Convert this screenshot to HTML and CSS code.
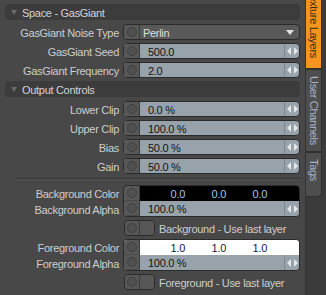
FILE: index.html
```html
<!DOCTYPE html>
<html lang="en">
<head>
    <meta charset="UTF-8">
    <title>Texture Layers</title>
    <link rel="stylesheet" href="styles.css">
</head>
<body>
    <div class="window">
        <div class="panel">
            <div class="group">
                <div class="head"><span class="tri"></span>Space - GasGiant</div>
                <div class="row">
                    <span class="label">GasGiant Noise Type</span>
                    <div class="ctl drop">
                        <span class="dot"><i></i></span>
                        <span class="val">Perlin</span>
                        <svg class="down" width="8" height="5" viewBox="0 0 8 5"><polygon points="0,0 8,0 4,5"/></svg>
                    </div>
                </div>
                <div class="row">
                    <span class="label">GasGiant Seed</span>
                    <div class="ctl num">
                        <span class="dot"><i></i></span>
                        <span class="val">500.0</span>
                        <span class="spin"><svg width="11" height="8" viewBox="0 0 11 8"><polygon points="0,4 4,0 4,8"/><polygon points="7,0 11,4 7,8"/></svg></span>
                    </div>
                </div>
                <div class="row">
                    <span class="label">GasGiant Frequency</span>
                    <div class="ctl num">
                        <span class="dot"><i></i></span>
                        <span class="val">2.0</span>
                        <span class="spin"><svg width="11" height="8" viewBox="0 0 11 8"><polygon points="0,4 4,0 4,8"/><polygon points="7,0 11,4 7,8"/></svg></span>
                    </div>
                </div>
            </div>

            <div class="group">
                <div class="head"><span class="tri"></span>Output Controls</div>
                <div class="row">
                    <span class="label">Lower Clip</span>
                    <div class="ctl num">
                        <span class="dot"><i></i></span>
                        <span class="val">0.0 %</span>
                        <span class="spin"><svg width="11" height="8" viewBox="0 0 11 8"><polygon points="0,4 4,0 4,8"/><polygon points="7,0 11,4 7,8"/></svg></span>
                    </div>
                </div>
                <div class="row">
                    <span class="label">Upper Clip</span>
                    <div class="ctl num">
                        <span class="dot"><i></i></span>
                        <span class="val">100.0 %</span>
                        <span class="spin"><svg width="11" height="8" viewBox="0 0 11 8"><polygon points="0,4 4,0 4,8"/><polygon points="7,0 11,4 7,8"/></svg></span>
                    </div>
                </div>
                <div class="row">
                    <span class="label">Bias</span>
                    <div class="ctl num">
                        <span class="dot"><i></i></span>
                        <span class="val">50.0 %</span>
                        <span class="spin"><svg width="11" height="8" viewBox="0 0 11 8"><polygon points="0,4 4,0 4,8"/><polygon points="7,0 11,4 7,8"/></svg></span>
                    </div>
                </div>
                <div class="row">
                    <span class="label">Gain</span>
                    <div class="ctl num">
                        <span class="dot"><i></i></span>
                        <span class="val">50.0 %</span>
                        <span class="spin"><svg width="11" height="8" viewBox="0 0 11 8"><polygon points="0,4 4,0 4,8"/><polygon points="7,0 11,4 7,8"/></svg></span>
                    </div>
                </div>
            </div>

            <div class="sep"></div>

            <div class="group">
                <div class="pair">
                    <div class="labels">
                        <span class="label">Background Color</span>
                        <span class="label">Background Alpha</span>
                    </div>
                    <div class="box">
                        <div class="line color bg">
                            <span class="dot"><i></i></span>
                            <span class="cols"><span>0.0</span><span>0.0</span><span>0.0</span></span>
                        </div>
                        <div class="line num">
                            <span class="dot"><i></i></span>
                            <span class="val">100.0 %</span>
                            <span class="spin"><svg width="11" height="8" viewBox="0 0 11 8"><polygon points="0,4 4,0 4,8"/><polygon points="7,0 11,4 7,8"/></svg></span>
                        </div>
                    </div>
                </div>
                <div class="row">
                    <span class="label"></span>
                    <div class="check">
                        <span class="toggle"><span class="dot"><i></i></span><span class="half"></span></span>
                        <span class="text">Background - Use last layer</span>
                    </div>
                </div>
                <div class="pair">
                    <div class="labels">
                        <span class="label">Foreground Color</span>
                        <span class="label">Foreground Alpha</span>
                    </div>
                    <div class="box">
                        <div class="line color fg">
                            <span class="dot"><i></i></span>
                            <span class="cols"><span>1.0</span><span>1.0</span><span>1.0</span></span>
                        </div>
                        <div class="line num">
                            <span class="dot"><i></i></span>
                            <span class="val">100.0 %</span>
                            <span class="spin"><svg width="11" height="8" viewBox="0 0 11 8"><polygon points="0,4 4,0 4,8"/><polygon points="7,0 11,4 7,8"/></svg></span>
                        </div>
                    </div>
                </div>
                <div class="row">
                    <span class="label"></span>
                    <div class="check">
                        <span class="toggle"><span class="dot"><i></i></span><span class="half"></span></span>
                        <span class="text">Foreground - Use last layer</span>
                    </div>
                </div>
            </div>
        </div>

        <div class="tabs">
            <div class="tab active"><span>Texture Layers</span></div>
            <div class="tab"><span>User Channels</span></div>
            <div class="tab last"><span>Tags</span></div>
        </div>
    </div>
</body>
</html>
```

FILE: styles.css
```css
* {
    box-sizing: border-box;
}

body {
    margin: 0;
    background-color: #3b3b3b;
    font-family: "Liberation Sans", Arial, sans-serif;
    font-size: 11px;
    letter-spacing: -0.3px;
    color: #cecece;
}

.window {
    display: flex;
    width: 326px;
    height: 295px;
    overflow: hidden;
}

.panel {
    width: 305px;
    background-color: #484848;
    padding-top: 4px;
    display: flex;
    flex-direction: column;
    gap: 3px;
}

.group {
    display: flex;
    flex-direction: column;
    gap: 3px;
}

/* Section header band */
.head {
    margin-left: 5px;
    width: 295px;
    height: 16px;
    margin-bottom: 1px;
    background-color: #3c3c3c;
    border-radius: 4px;
    color: #d4d4d4;
    display: flex;
    align-items: center;
    padding-top: 1px;
}

.tri {
    width: 0;
    height: 0;
    margin: 0 5px 0 6px;
    border-left: 3px solid transparent;
    border-right: 3px solid transparent;
    border-top: 5px solid #6b6b6b;
}

.row {
    display: grid;
    grid-template-columns: 119px 177px;
    column-gap: 4px;
    height: 16px;
}

.label {
    text-align: right;
    line-height: 16px;
    padding-top: 1px;
    white-space: nowrap;
}

.ctl {
    display: flex;
    align-items: stretch;
    height: 16px;
    border: 1px solid #2b2b2b;
    border-radius: 4px;
    overflow: hidden;
}

.dot {
    width: 16px;
    flex: none;
    background-color: #575757;
    border-right: 1px solid #3a3a3a;
    display: flex;
    align-items: center;
    justify-content: center;
}

.dot i {
    width: 10px;
    height: 10px;
    border-radius: 50%;
    background-color: #505050;
    border: 1px solid #404040;
}

.val {
    flex: 1;
    line-height: 14px;
    padding-top: 1px;
    white-space: nowrap;
}

.drop {
    background-color: #595959;
    color: #dedede;
}

.drop .val {
    padding-left: 3px;
}

.down {
    fill: #e2e2e2;
    align-self: center;
    margin-right: 5px;
}

.num {
    background-color: #98a2ab;
    color: #141414;
}

.num .val {
    padding-left: 8px;
}

.spin {
    width: 15px;
    flex: none;
    border-left: 1px solid #7f878f;
    display: flex;
    align-items: center;
    justify-content: center;
}

.spin svg {
    fill: #e6e8ea;
}

.sep {
    margin: 1px 3px 2px 16px;
    height: 2px;
    border-top: 1px solid #373737;
    border-bottom: 1px solid #515151;
}

/* Colour + alpha pairs */
.pair {
    display: grid;
    grid-template-columns: 119px 177px;
    column-gap: 4px;
    height: 32px;
}

.labels {
    display: flex;
    flex-direction: column;
}

.labels .label {
    height: 16px;
}

.box {
    border: 1px solid #2b2b2b;
    border-radius: 4px;
    overflow: hidden;
    display: flex;
    flex-direction: column;
}

.line {
    display: flex;
    height: 15px;
}

.line .dot {
    border-bottom: 1px solid #4a4a4a;
}

.color.bg {
    background-color: #000;
    color: #a9c6e8;
}

.color.fg {
    background-color: #fff;
    color: #14224a;
}

.cols {
    display: grid;
    grid-template-columns: repeat(3, 41px);
    padding-left: 4px;
    line-height: 15px;
    padding-top: 1px;
}

.cols span {
    text-align: right;
}

.check {
    display: flex;
    align-items: center;
    gap: 4px;
}

.toggle {
    display: flex;
    width: 31px;
    height: 16px;
    margin-left: 1px;
    border: 1px solid #2b2b2b;
    border-radius: 4px;
    overflow: hidden;
}

.toggle .dot {
    width: 15px;
}

.half {
    flex: 1;
    background-color: #575757;
}

.text {
    color: #cecece;
    padding-top: 1px;
    white-space: nowrap;
}

/* Vertical tabs on the right */
.tabs {
    width: 21px;
    border-left: 1px solid #333;
    display: flex;
    flex-direction: column;
    margin-top: -17px;
}

.tab {
    width: 16px;
    background-color: #4e4e4e;
    border: 1px solid #303030;
    border-left: none;
    writing-mode: vertical-rl;
    color: #a9b5cb;
    display: flex;
    align-items: center;
    padding: 6px 0;
}

.tab span {
    white-space: nowrap;
}

.tab.active {
    background-color: #f5951f;
    color: #3a2b14;
    height: 86px;
    padding-top: 6px;
}

.tab:nth-child(2) {
    height: 83px;
}

.tab.last {
    height: 45px;
    border-radius: 0 0 5px 0;
}
```
